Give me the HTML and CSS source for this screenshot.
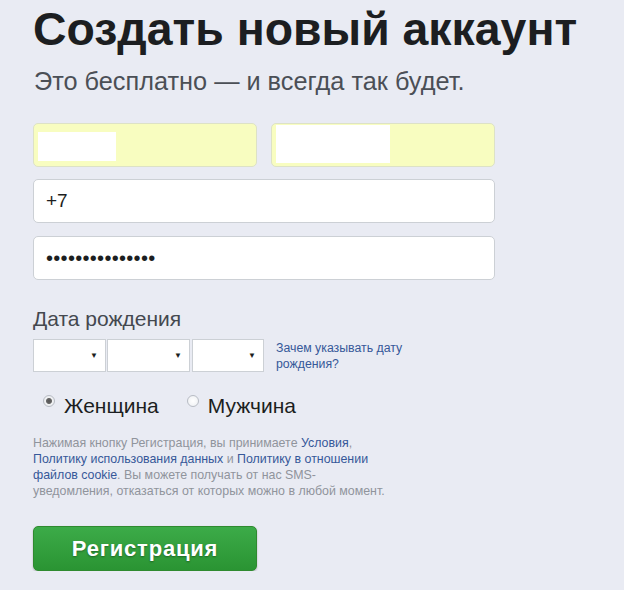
FILE: index.html
```html
<!DOCTYPE html>
<html lang="ru">
<head>
<meta charset="utf-8">
<title>Создать новый аккаунт</title>
<link rel="stylesheet" href="styles.css">
</head>
<body>
<main class="signup">
  <h1 class="title">Создать новый аккаунт</h1>
  <p class="subtitle">Это бесплатно — и всегда так будет.</p>

  <div class="name-row">
    <div class="field field-auto"><span class="mask mask-first"></span></div>
    <div class="field field-auto"><span class="mask mask-last"></span></div>
  </div>
  <div class="field field-phone"><span class="value">+7</span></div>
  <div class="field field-pass"><span class="value dots">•••••••••••••••</span></div>

  <div class="birth-label">Дата рождения</div>
  <div class="birth-row">
    <div class="select s-day"><span class="arrow">▼</span></div>
    <div class="select s-month"><span class="arrow">▼</span></div>
    <div class="select s-year"><span class="arrow">▼</span></div>
    <a class="why" href="#">Зачем указывать дату рождения?</a>
  </div>

  <div class="gender-row">
    <label class="gender"><span class="radio checked"></span>Женщина</label>
    <label class="gender"><span class="radio"></span>Мужчина</label>
  </div>

  <p class="legal">Нажимая кнопку Регистрация, вы принимаете <a href="#">Условия</a>,<br><a href="#">Политику использования данных</a> и <a href="#">Политику в отношении<br>файлов cookie</a>. Вы можете получать от нас SMS-<br>уведомления, отказаться от которых можно в любой момент.</p>

  <button class="submit" type="button">Регистрация</button>
</main>
</body>
</html>
```

FILE: styles.css
```css
html, body {
  margin: 0;
  padding: 0;
  background: #e9ebf3;
}
body {
  font-family: "Liberation Sans", Arial, sans-serif;
  color: #1c1e21;
}
.signup {
  width: 462px;
  padding: 4px 0 0 33px;
  display: flex;
  flex-direction: column;
}
.title {
  margin: 0;
  font-size: 46.4px;
  line-height: 50px;
  font-weight: bold;
  color: #1c1e21;
  white-space: nowrap;
}
.subtitle {
  margin: 12px 0 0 1px;
  font-size: 25.3px;
  line-height: 30px;
  color: #4b4f56;
  white-space: nowrap;
}
.name-row {
  margin-top: 27px;
  display: flex;
  gap: 14px;
}
.field {
  box-sizing: border-box;
  height: 44px;
  background: #fff;
  border: 1px solid #ccd0d5;
  border-radius: 5px;
  display: flex;
  align-items: center;
  padding-left: 12px;
}
.name-row .field {
  flex: 0 0 224px;
}
.field-phone {
  margin-top: 12px;
}
.field-pass {
  margin-top: 13px;
}
.field-auto {
  background: #f8fdc0;
  border-color: #dde2c6;
  padding-left: 4px;
}
.mask {
  display: block;
  background: #fff;
}
.mask-first {
  width: 78px;
  height: 29px;
  margin-top: 2px;
}
.mask-last {
  width: 114px;
  height: 38px;
  margin-top: -2px;
}
.value {
  font-size: 19px;
  color: #1c1e21;
}
.dots {
  font-size: 20px;
  letter-spacing: 0.3px;
}
.birth-label {
  margin-top: 27px;
  font-size: 21px;
  line-height: 24px;
  color: #44484f;
}
.birth-row {
  margin-top: 8px;
  display: flex;
  align-items: center;
}
.select {
  box-sizing: border-box;
  height: 33px;
  background: #fff;
  border: 1px solid #ccd0d5;
  display: flex;
  align-items: center;
  justify-content: flex-end;
  padding-right: 7px;
}
.s-day { width: 73px; }
.s-month { width: 83px; margin-left: 1px; }
.s-year { width: 72px; margin-left: 2px; }
.arrow {
  font-size: 8px;
  color: #1c1e21;
}
.why {
  margin-left: 12px;
  width: 145px;
  font-size: 12.3px;
  line-height: 16px;
  color: #365899;
  text-decoration: none;
}
.gender-row {
  margin-top: 22px;
  display: flex;
  gap: 28px;
  padding-left: 10px;
}
.gender {
  display: flex;
  align-items: center;
  font-size: 21px;
  line-height: 24px;
  color: #1c1e21;
}
.radio {
  box-sizing: border-box;
  width: 12px;
  height: 12px;
  border-radius: 50%;
  border: 1px solid #b8bcc4;
  background: radial-gradient(circle, #fff 0, #eceef1 100%);
  margin-right: 9px;
  position: relative;
  top: -5px;
}
.radio.checked {
  background: radial-gradient(circle, #555 0, #666 2.5px, #f0f1f3 3.5px, #e8eaee 100%);
}
.legal {
  margin: 17px 0 0;
  font-size: 12.4px;
  line-height: 16px;
  color: #90949c;
  white-space: nowrap;
}
.legal a {
  color: #365899;
  text-decoration: none;
}
.submit {
  margin-top: 27px;
  width: 224px;
  height: 45px;
  border: 1px solid #2f8a2f;
  border-radius: 5px;
  background: linear-gradient(#3cab48, #2a9433);
  color: #fff;
  font-family: "Liberation Sans", Arial, sans-serif;
  font-size: 22px;
  font-weight: bold;
  letter-spacing: 0.8px;
  text-shadow: 0 1px 2px rgba(0, 0, 0, 0.35);
  box-shadow: 0 1px 2px rgba(0, 0, 0, 0.25);
  cursor: pointer;
}
```
